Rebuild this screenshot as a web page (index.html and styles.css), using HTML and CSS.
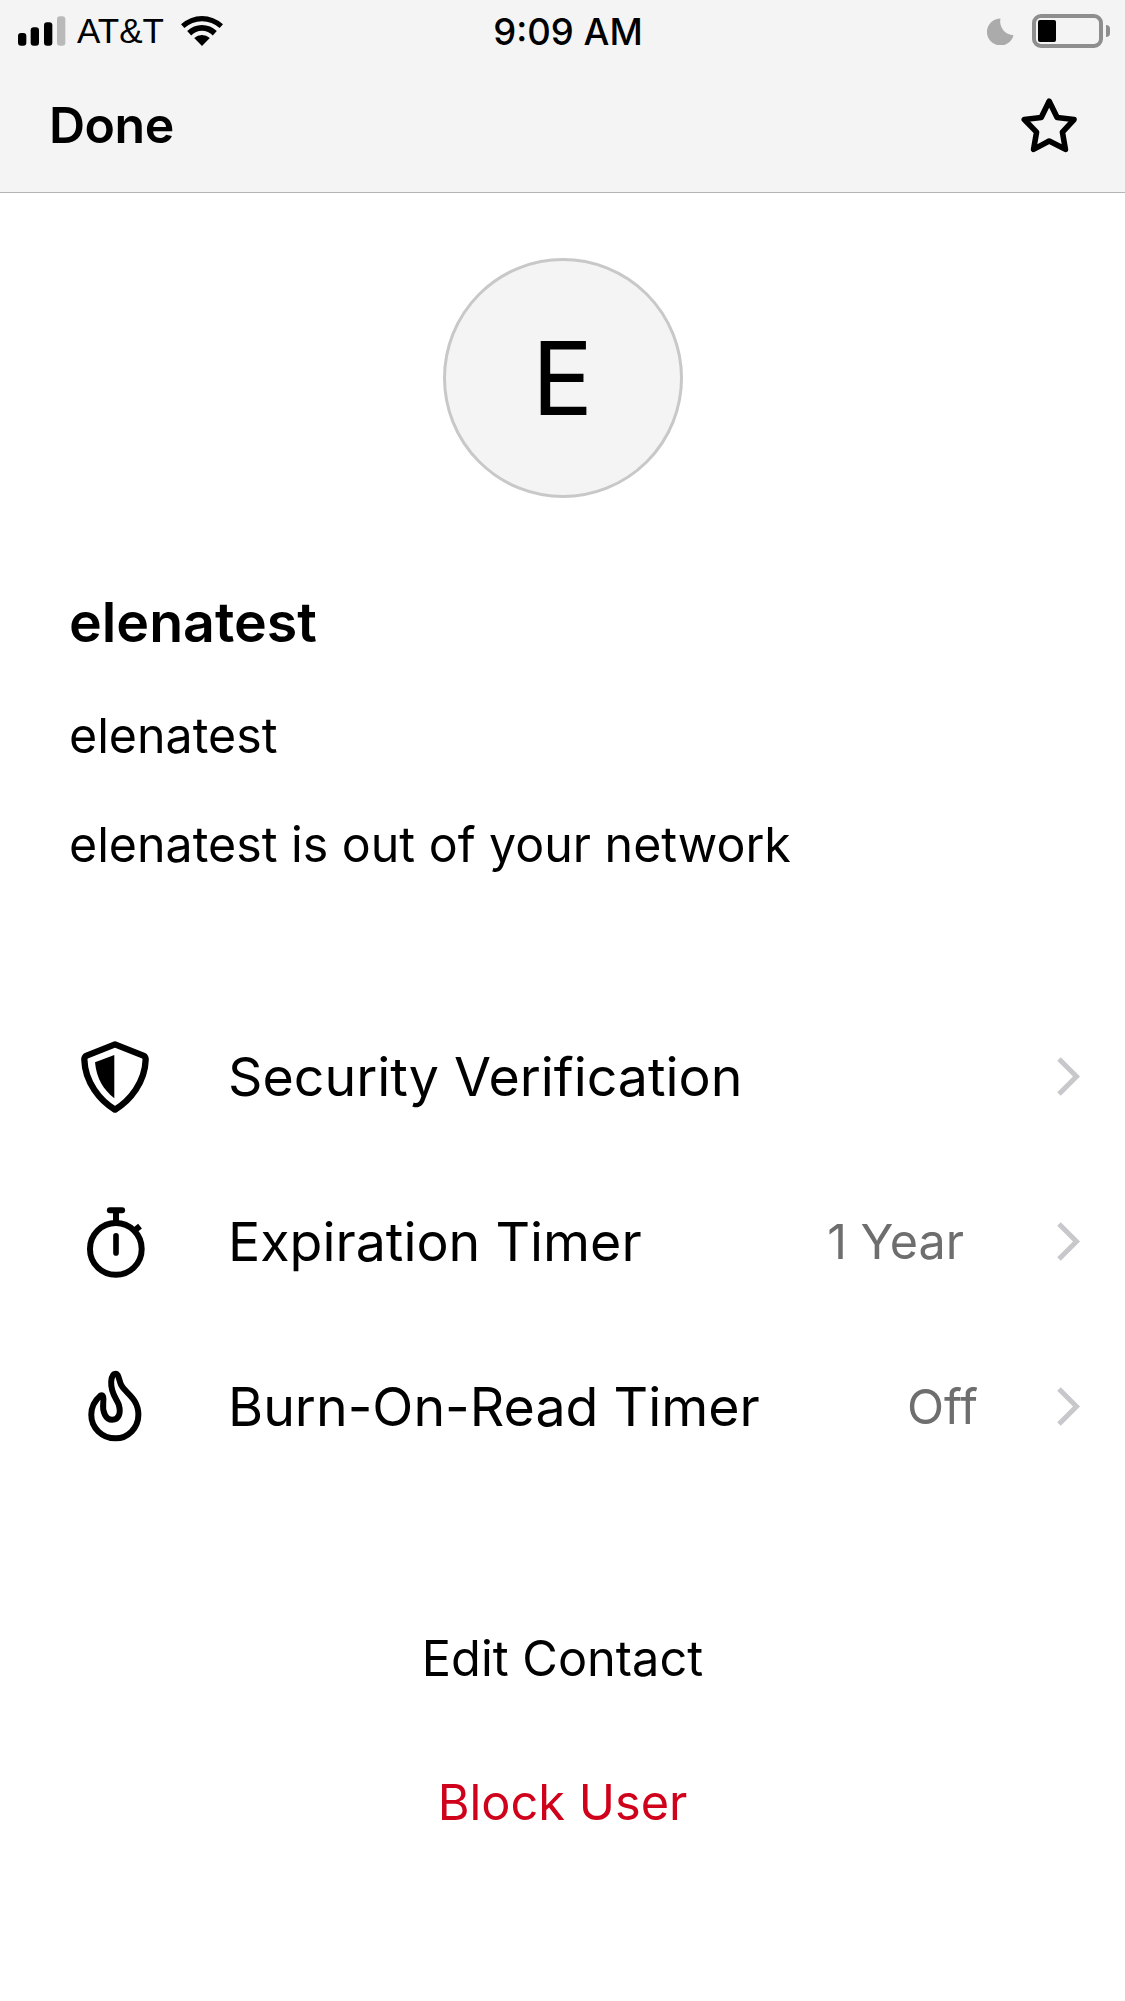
FILE: index.html
```html
<!DOCTYPE html>
<html lang="en">
<head>
<meta charset="utf-8">
<title>elenatest</title>
<link rel="stylesheet" href="styles.css">
</head>
<body>
<header class="top">
  <div class="status">
    <div class="status-left">
      <svg class="signal" width="48" height="30" viewBox="25 21 144 90"><rect x="25" y="72" width="25" height="38" rx="9" fill="#000"/><rect x="63" y="55" width="25" height="55" rx="9" fill="#000"/><rect x="103" y="40" width="25" height="70" rx="9" fill="#000"/><rect x="142" y="22" width="25" height="88" rx="9" fill="#b9b9b9"/></svg>
      <span class="carrier">AT&amp;T</span>
      <svg class="wifi" width="42" height="30" viewBox="0 0 42 30"><path d="M21 30 L13.2 22 A11.5 11.5 0 0 1 28.8 22 Z M6.2 15 A21 21 0 0 1 35.8 15 L31.8 19.4 A15 15 0 0 0 10.2 19.4 Z M0 8.3 A31 31 0 0 1 42 8.3 L38.6 12 A26 26 0 0 0 3.4 12 Z" fill="#000"/></svg>
    </div>
    <span class="clock">9:09 AM</span>
    <div class="status-right">
      <svg class="moon" width="27" height="27" viewBox="0 0 28 28"><path d="M14 0.5 A14 14 0 1 0 27.5 18 A14.5 14.5 0 0 1 14 0.5 Z" fill="#ababab"/></svg>
      <div class="battery"><div class="battery-fill"></div></div>
      <div class="battery-cap"></div>
    </div>
  </div>
  <div class="nav">
    <span class="done">Done</span>
    <svg class="star" width="58" height="57" viewBox="60 35 175 170"><path d="M148 47 L172 96 L223 102 L188 140 L197 192 L148 167 L101 192 L110 140 L73 102 L124 96 Z" fill="none" stroke="#000" stroke-width="17" stroke-linejoin="round"/></svg>
  </div>
</header>
<main class="content">
  <div class="avatar">E</div>
  <section class="profile">
    <h1 class="name">elenatest</h1>
    <p class="line">elenatest</p>
    <p class="line">elenatest is out of your network</p>
  </section>
  <section class="rows">
    <div class="row">
      <span class="row-icon">
        <svg width="70" height="75" viewBox="90 60 210 225"><path d="M195 76 L280 110 Q287 113 287 122 C285 190 240 245 195 272 C150 245 105 190 103 122 Q103 113 110 110 Z" fill="none" stroke="#000" stroke-width="19" stroke-linejoin="round"/><path d="M193 108 L193 238 C160 212 140 180 135 130 Z" fill="#000"/></svg>
      </span>
      <span class="row-label">Security Verification</span>
      <svg class="chev" width="24" height="40" viewBox="0 0 24 40"><path d="M3 2 L20.5 19.5 L3 37" fill="none" stroke="#c7c7cc" stroke-width="5"/></svg>
    </div>
    <div class="row">
      <span class="row-icon">
        <svg width="63" height="75" viewBox="40 25 190 225"><circle cx="136" cy="160" r="78" fill="none" stroke="#000" stroke-width="18"/><path d="M118 43 H155" fill="none" stroke="#000" stroke-width="18" stroke-linecap="round"/><path d="M136.500 45 V82 M193 104 L209 91" fill="none" stroke="#000" stroke-width="18"/><path d="M136.500 120 V172" fill="none" stroke="#000" stroke-width="17" stroke-linecap="round"/></svg>
      </span>
      <span class="row-label">Expiration Timer</span>
      <span class="row-value value-year">1 Year</span>
      <svg class="chev" width="24" height="40" viewBox="0 0 24 40"><path d="M3 2 L20.5 19.5 L3 37" fill="none" stroke="#c7c7cc" stroke-width="5"/></svg>
    </div>
    <div class="row">
      <span class="row-icon">
        <svg width="57" height="73" viewBox="110 90 170 220"><path d="M195 101 C205 101 205 120 212 135 C225 160 264 175 264 225 C264 265 232 296 195 296 C155 296 122 265 122 225 C122 200 135 180 150 167 C158 162 160 175 158 190 C155 215 165 240 185 240 C205 240 212 220 205 195 C198 175 180 160 182 125 C183 110 188 101 195 101 Z" fill="none" stroke="#000" stroke-width="18" stroke-linejoin="round"/></svg>
      </span>
      <span class="row-label">Burn-On-Read Timer</span>
      <span class="row-value value-off">Off</span>
      <svg class="chev" width="24" height="40" viewBox="0 0 24 40"><path d="M3 2 L20.5 19.5 L3 37" fill="none" stroke="#c7c7cc" stroke-width="5"/></svg>
    </div>
  </section>
  <section class="actions">
    <div class="action">Edit Contact</div>
    <div class="action danger">Block User</div>
  </section>
</main>
</body>
</html>
```
FILE: styles.css
```css
* { box-sizing: border-box; }
html, body { margin: 0; padding: 0; }
body {
  width: 1125px;
  height: 2001px;
  background: #fff;
  color: #000;
  font-family: "Inter", "Liberation Sans", sans-serif;
  overflow: hidden;
}
.top {
  height: 193px;
  background: #f4f4f4;
  border-bottom: 1px solid #b4b4b4;
}
.status {
  padding: 8px 15px 0 18px;
  display: grid;
  grid-template-columns: 1fr auto 1fr;
  align-items: center;
  height: 52px;
}
.status-left { display: flex; align-items: center; }
.carrier { font-size: 35px; margin-left: 11px; font-family: "Liberation Sans", sans-serif; }
.wifi { margin-left: 17px; }
.clock { font-size: 36.5px; font-weight: 500; margin: 2px 0 0 8px; }
.status-right { display: flex; align-items: center; justify-content: flex-end; }
.moon { margin-right: 18px; }
.battery {
  width: 71px;
  height: 34px;
  border: 4px solid #8e8e8e;
  border-radius: 9px;
  padding: 2px;
  margin-right: 3px;
}
.battery-fill { width: 18px; height: 22px; background: #000; border-radius: 2px; }
.battery-cap { width: 4px; height: 12px; background: #8e8e8e; border-radius: 0 4px 4px 0; }
.nav {
  display: flex;
  justify-content: space-between;
  align-items: center;
  padding: 0 47px 0 49px;
  height: 80px;
  margin-top: 33px;
}
.done { font-size: 50px; font-weight: 600; letter-spacing: -0.5px; }
.content { display: flex; flex-direction: column; }
.avatar {
  width: 240px;
  height: 240px;
  margin: 65px auto 0;
  border-radius: 50%;
  background: #f4f4f4;
  border: 3px solid #c8c8c8;
  display: flex;
  align-items: center;
  justify-content: center;
  font-size: 102px;
}
.profile { padding: 0 69px; margin-top: 91px; }
.name { margin: 0; font-size: 55.5px; font-weight: 600; line-height: 66px; }
.line { margin: 0; font-size: 48.3px; line-height: 58px; }
.name + .line { margin-top: 52px; }
.line + .line { margin-top: 51px; }
.rows { margin-top: 120px; display: flex; flex-direction: column; }
.row {
  height: 165px;
  display: flex;
  align-items: center;
  padding: 0 45px 0 70px;
}
.row-icon { width: 90px; margin-right: 68px; flex: none; display: flex; justify-content: center; }
.row-icon svg { display: block; }
.row-label { font-size: 53.7px; flex: 1; }
.row-value { font-size: 48.5px; color: #6e6e6e; }
.value-year { margin-right: 92px; }
.value-off { margin-right: 78px; }
.actions { margin-top: 141px; display: flex; flex-direction: column; align-items: center; }
.action { font-size: 48.7px; line-height: 58px; margin-bottom: 86px; }
.danger { color: #d0021b; }
```
